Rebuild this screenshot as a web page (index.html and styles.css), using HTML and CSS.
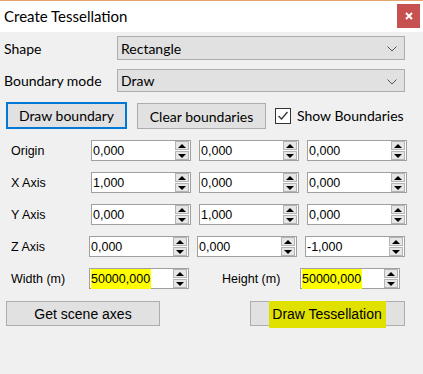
FILE: index.html
```html
<!DOCTYPE html>
<html lang="en">
<head>
  <meta charset="UTF-8">
  <title>Create Tessellation</title>
  <link rel="stylesheet" href="styles.css">
</head>
<body>
  <div class="window">
    <div class="titlebar">
      <span class="title">Create Tessellation</span>
      <div class="close">
        <svg width="8" height="8" viewBox="0 0 8 8"><path d="M1 1L7 7M7 1L1 7" stroke="#fff" stroke-width="2"/></svg>
      </div>
    </div>

    <div class="content">
      <div class="row combo-row first">
        <span class="label">Shape</span>
        <div class="combo">Rectangle
          <svg class="chev" width="10" height="6" viewBox="0 0 10 6"><path d="M0.5 0.5L5 5L9.5 0.5" fill="none" stroke="#555" stroke-width="1"/></svg>
        </div>
      </div>
      <div class="row combo-row second">
        <span class="label">Boundary mode</span>
        <div class="combo">Draw
          <svg class="chev" width="10" height="6" viewBox="0 0 10 6"><path d="M0.5 0.5L5 5L9.5 0.5" fill="none" stroke="#555" stroke-width="1"/></svg>
        </div>
      </div>

      <div class="row tools-row">
        <button class="btn btn-default">Draw boundary</button>
        <button class="btn btn-clear">Clear boundaries</button>
        <span class="checkbox">
          <svg width="14" height="14" viewBox="0 0 14 14"><path d="M2.5 7L5.5 10L11.5 3" fill="none" stroke="#333" stroke-width="1.3"/></svg>
        </span>
        <span class="check-label">Show Boundaries</span>
      </div>

      <div class="row axis-row">
        <span class="axis-label">Origin</span>
        <div class="spin"><span class="val">0,000</span><div class="arrows"><i class="up"></i><i class="down"></i></div></div>
        <div class="spin"><span class="val">0,000</span><div class="arrows"><i class="up"></i><i class="down"></i></div></div>
        <div class="spin"><span class="val">0,000</span><div class="arrows"><i class="up"></i><i class="down"></i></div></div>
      </div>
      <div class="row axis-row">
        <span class="axis-label">X Axis</span>
        <div class="spin"><span class="val">1,000</span><div class="arrows"><i class="up"></i><i class="down"></i></div></div>
        <div class="spin"><span class="val">0,000</span><div class="arrows"><i class="up"></i><i class="down"></i></div></div>
        <div class="spin"><span class="val">0,000</span><div class="arrows"><i class="up"></i><i class="down"></i></div></div>
      </div>
      <div class="row axis-row">
        <span class="axis-label">Y Axis</span>
        <div class="spin"><span class="val">0,000</span><div class="arrows"><i class="up"></i><i class="down"></i></div></div>
        <div class="spin"><span class="val">1,000</span><div class="arrows"><i class="up"></i><i class="down"></i></div></div>
        <div class="spin"><span class="val">0,000</span><div class="arrows"><i class="up"></i><i class="down"></i></div></div>
      </div>
      <div class="row axis-row shifted">
        <span class="axis-label">Z Axis</span>
        <div class="spin"><span class="val">0,000</span><div class="arrows"><i class="up"></i><i class="down"></i></div></div>
        <div class="spin"><span class="val">0,000</span><div class="arrows"><i class="up"></i><i class="down"></i></div></div>
        <div class="spin"><span class="val">-1,000</span><div class="arrows"><i class="up"></i><i class="down"></i></div></div>
      </div>

      <div class="row axis-row size-row">
        <span class="axis-label">Width (m)</span>
        <div class="spin"><span class="val mark">50000,000</span><div class="arrows"><i class="up"></i><i class="down"></i></div></div>
        <span class="axis-label height-label">Height (m)</span>
        <div class="spin"><span class="val mark">50000,000</span><div class="arrows"><i class="up"></i><i class="down"></i></div></div>
      </div>

      <div class="row bottom-row">
        <button class="btn btn-axes">Get scene axes</button>
        <button class="btn btn-draw"><span class="mark-btn">Draw Tessellation</span></button>
      </div>
    </div>
  </div>
</body>
</html>
```

FILE: styles.css
```css
body {
  margin: 0;
  background-color: #f0f0f0;
  font-family: 'Lato', 'Noto Sans', sans-serif;
  color: #000;
}

.window {
  width: 423px;
  height: 374px;
  background-color: #f0f0f0;
}

.titlebar {
  height: 31px;
  border-top: 1px solid #e8a56b;
  background-color: #fff;
  display: flex;
  align-items: center;
  justify-content: space-between;
}

.title {
  font-size: 15px;
  padding-left: 4px;
  padding-bottom: 2px;
}

.close {
  width: 23px;
  height: 24px;
  margin-right: 3px;
  margin-bottom: 2px;
  background-color: #c75050;
  display: flex;
  align-items: center;
  justify-content: center;
}

.row {
  display: flex;
  align-items: center;
}

/* top combo rows */
.combo-row .label {
  width: 113px;
  padding-left: 4px;
  font-size: 14px;
}

.first {
  margin-top: 4px;
  height: 24px;
}

.second {
  margin-top: 9px;
  height: 23px;
}

.combo {
  box-sizing: border-box;
  width: 288px;
  height: 100%;
  background-color: #e1e1e1;
  border: 1px solid #adadad;
  padding-left: 3px;
  font-size: 14px;
  display: flex;
  align-items: center;
  position: relative;
}

.chev {
  position: absolute;
  right: 7px;
  top: 9px;
}

/* buttons */
.btn {
  box-sizing: border-box;
  background-color: #e1e1e1;
  border: 1px solid #adadad;
  padding: 0;
  color: #000;
}

.tools-row {
  margin-top: 10px;
  padding-left: 6px;
  align-items: flex-start;
  height: 27px;
}

.tools-row .btn {
  font-family: 'Lato', 'Noto Sans', sans-serif;
  font-size: 14px;
}

.btn-default {
  width: 121px;
  height: 27px;
  border: 2px solid #0078d7;
}

.btn-clear {
  width: 129px;
  height: 26px;
  margin-left: 10px;
  margin-top: 1px;
}

.checkbox {
  box-sizing: border-box;
  width: 16px;
  height: 16px;
  margin-left: 9px;
  margin-top: 6px;
  background-color: #fff;
  border: 1px solid #333;
  display: flex;
}

.check-label {
  margin-left: 6px;
  margin-top: 5px;
  font-size: 14px;
}

/* axis rows */
.axis-row {
  margin-top: 11px;
  height: 21px;
  font-family: 'Liberation Sans', Arial, sans-serif;
  font-size: 12.5px;
}

.axis-label {
  width: 80px;
  padding-left: 11px;
}

.shifted .axis-label,
.size-row .axis-label {
  width: 78px;
}

.spin {
  box-sizing: border-box;
  width: 100px;
  height: 100%;
  margin-right: 8px;
  background-color: #fff;
  border: 1px solid #a0a0a0;
  display: flex;
  align-items: center;
  justify-content: space-between;
  padding-left: 1px;
}

.arrows {
  display: flex;
  flex-direction: column;
  gap: 1px;
  margin-right: 1px;
}

.arrows i {
  box-sizing: border-box;
  width: 14px;
  height: 9px;
  background-color: #e6e6e6;
  border: 1px solid #b4b4b4;
  display: flex;
  align-items: center;
  justify-content: center;
}

.arrows i::after {
  content: '';
  border-left: 4px solid transparent;
  border-right: 4px solid transparent;
}

.arrows .up::after {
  border-bottom: 4px solid #000;
}

.arrows .down::after {
  border-top: 4px solid #000;
}

.mark {
  background-color: #ffff00;
  padding: 3px 1px 3px 0;
}

.size-row .spin {
  margin-right: 0;
}

.height-label {
  margin-left: 33px;
  padding-left: 0;
  width: 85px;
}

/* bottom buttons */
.bottom-row {
  margin-top: 12px;
  padding-left: 6px;
  height: 25px;
}

.bottom-row .btn {
  height: 25px;
  font-family: 'Liberation Sans', Arial, sans-serif;
  font-size: 14px;
}

.btn-axes {
  width: 154px;
}

.btn-draw {
  width: 155px;
  margin-left: 90px;
}

.mark-btn {
  background-color: #e1e100;
  padding: 5px 4px 6px 3px;
}
```
